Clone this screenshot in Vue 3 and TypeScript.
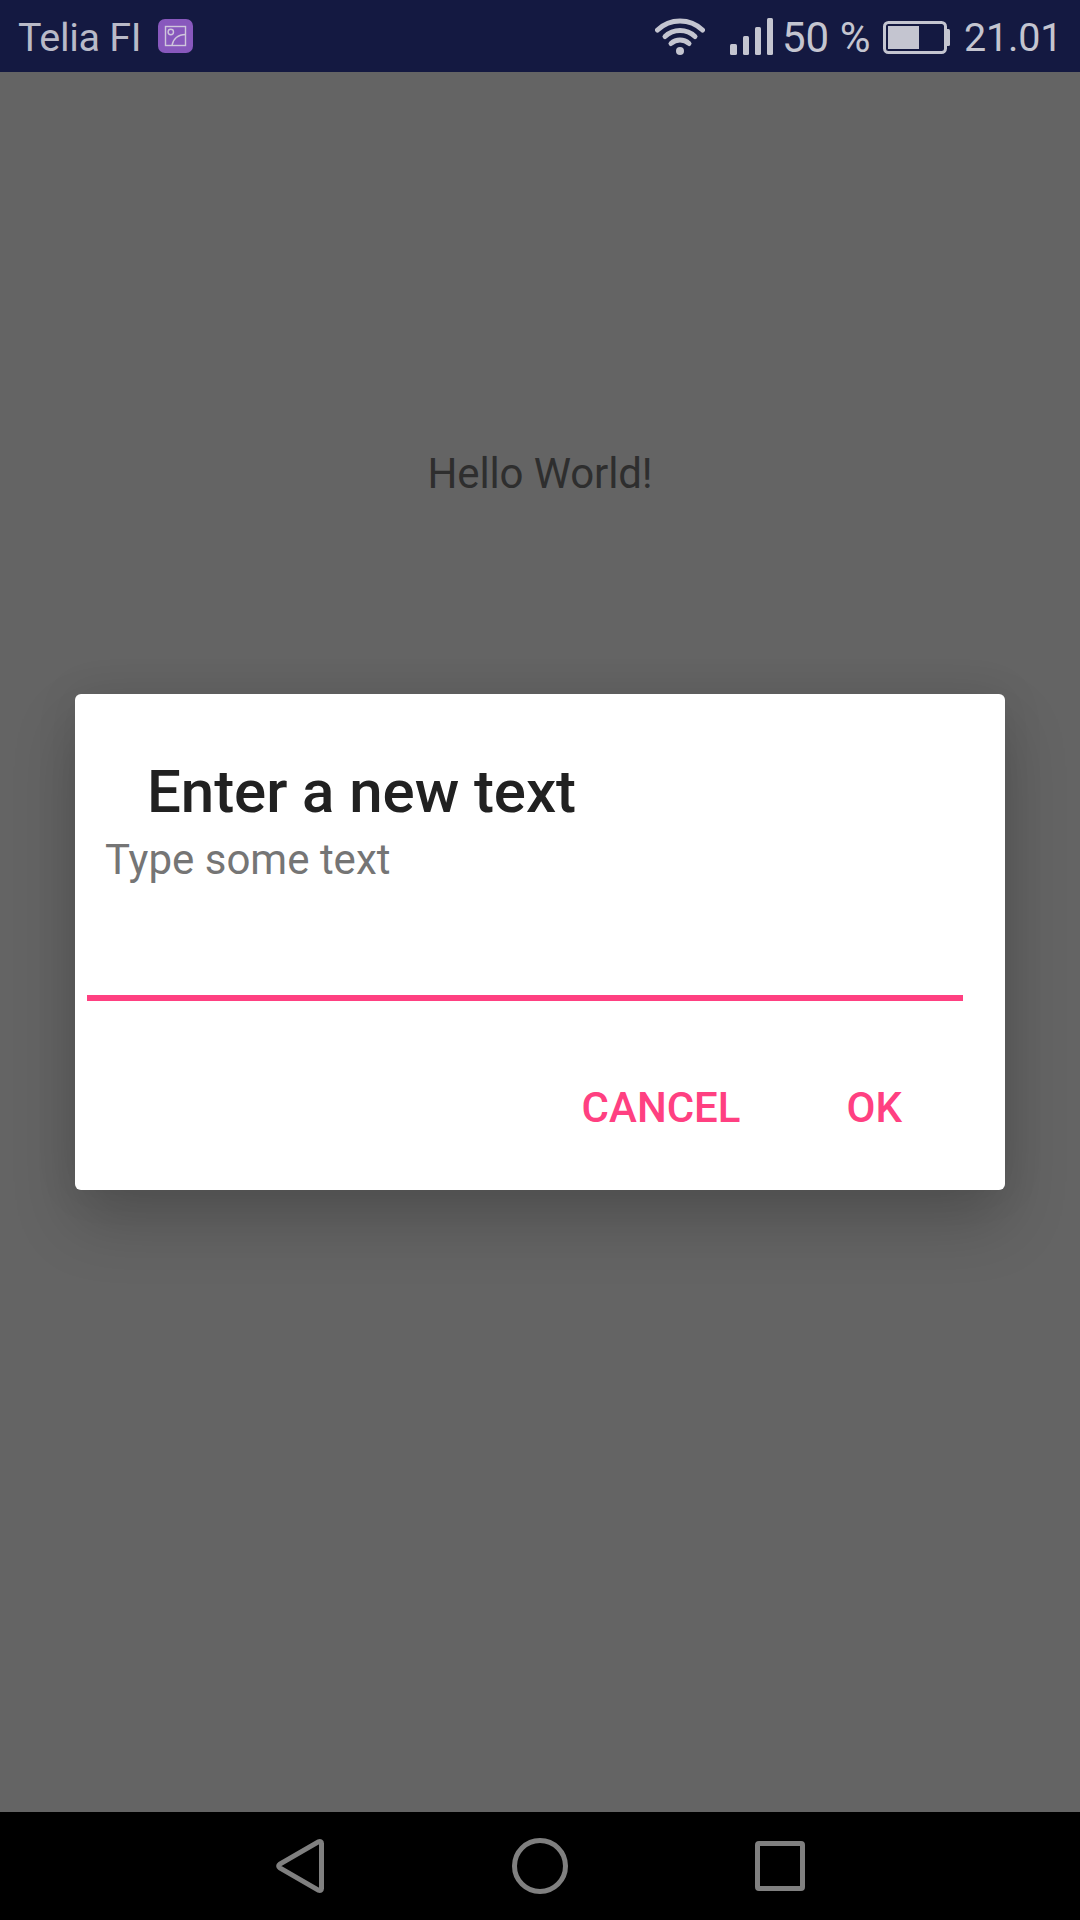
<script setup lang="ts">
import { ref } from 'vue'

interface SignalBar {
  x: number
  y: number
  width: number
}

const carrier = 'Telia FI'
const time = '21.01'
const battery = 50
const signalBars: SignalBar[] = [
  { x: 0, y: 26, width: 7 },
  { x: 13, y: 18, width: 6 },
  { x: 25, y: 9, width: 6 },
  { x: 37, y: 0, width: 6 },
]
const value = ref('')
</script>

<template>
  <div class="screen">
    <header class="status">
      <span class="carrier">{{ carrier }}</span>
      <svg class="app-icon" width="36" height="34" viewBox="0 0 36 34">
        <rect width="35" height="34" rx="7" fill="#8858bd" />
        <g fill="none" stroke="#cfc6dc" stroke-width="1.4">
          <rect x="7.5" y="7.5" width="20" height="19" />
          <circle cx="12.8" cy="13" r="2.7" />
          <path d="M14 26.500C15 20 20 15.500 27.500 15.500" />
        </g>
      </svg>
      <svg class="wifi" width="50" height="37" viewBox="0 0 50 37">
        <g fill="none" stroke="#c4c5d0" stroke-width="5" stroke-linecap="round">
          <path d="M2.500 12A32.600 32.600 0 0 1 47.500 12" />
          <path d="M10 18.500A21.800 21.800 0 0 1 40 18.500" />
          <path d="M16 25.500A13.300 13.300 0 0 1 34 25.500" />
        </g>
        <circle cx="25" cy="33" r="4" fill="#c4c5d0" />
      </svg>
      <svg class="signal" width="43" height="37" viewBox="0 0 43 37">
        <rect
          v-for="bar in signalBars"
          :key="bar.x"
          :x="bar.x"
          :y="bar.y"
          :width="bar.width"
          :height="37 - bar.y"
          rx="1.5"
          fill="#c4c5d0"
        />
      </svg>
      <span class="percent">{{ battery }} %</span>
      <svg class="battery" width="67" height="33" viewBox="0 0 67 33">
        <rect x="1.500" y="1.500" width="61" height="30" rx="4" fill="none" stroke="#c4c5d0" stroke-width="3" />
        <rect x="5" y="5" width="31" height="23" fill="#c4c5d0" />
        <path d="M63 8h2.500q1.500 0 1.500 1.500v14q0 1.500-1.500 1.500H63z" fill="#c4c5d0" />
      </svg>
      <span class="time">{{ time }}</span>
    </header>

    <main class="content">
      <p class="hello">Hello World!</p>
    </main>

    <nav class="navbar">
      <svg width="50" height="56" viewBox="0 0 50 56" class="back">
        <path d="M4.800 26.200L43.300 3.800Q46.500 2.800 46.500 5.500V50.500Q46.500 53.200 43.300 52.200L4.800 29.800Q2.500 28 4.800 26.200Z" fill="none" stroke="#808080" stroke-width="5" stroke-linejoin="round" />
      </svg>
      <svg width="56" height="56" viewBox="0 0 56 56" class="home">
        <circle cx="28" cy="28" r="25.500" fill="none" stroke="#808080" stroke-width="5" />
      </svg>
      <svg width="50" height="50" viewBox="0 0 50 50" class="recent">
        <path fill-rule="evenodd" fill="#808080" d="M4 0H46Q50 0 50 4V46Q50 50 46 50H4Q0 50 0 46V4Q0 0 4 0ZM5 5V45H45V5Z" />
      </svg>
    </nav>

    <div class="overlay">
      <section class="dialog" role="dialog">
        <h1 class="title">Enter a new text</h1>
        <p class="message">Type some text</p>
        <input v-model="value" class="field" type="text" />
        <div class="actions">
          <button type="button" class="cancel">CANCEL</button>
          <button type="button" class="ok">OK</button>
        </div>
      </section>
    </div>
  </div>
</template>

<style>
body {
  margin: 0;
}
</style>

<style scoped>
.screen {
  position: relative;
  display: flex;
  flex-direction: column;
  width: 1080px;
  height: 1920px;
  overflow: hidden;
  background: #646464;
  font-family: Roboto, 'Liberation Sans', sans-serif;
}

.status {
  display: flex;
  flex: none;
  align-items: flex-start;
  height: 72px;
  background: #141941;
  color: #b9bac8;
  font-size: 39.5px;
  line-height: 46px;
  white-space: nowrap;
}

.carrier {
  width: 140px;
  margin: 15px 0 0 18px;
  letter-spacing: -0.3px;
}

.app-icon {
  margin-top: 19px;
}

.wifi {
  margin: 18px 0 0 461px;
}

.signal {
  margin: 18px 0 0 25px;
}

.percent {
  width: 101px;
  margin: 15px 0 0 9px;
  color: #c4c5d0;
  font-size: 42px;
}

.battery {
  margin-top: 21px;
}

.time {
  margin: 15px 0 0 14px;
  color: #c4c5d0;
  letter-spacing: -0.2px;
}

.status svg,
.navbar svg {
  display: block;
  flex: none;
}

.content {
  flex: 1;
  padding-top: 377px;
}

.hello {
  margin: 0;
  color: #2e2e2e;
  font-size: 42px;
  letter-spacing: -0.12px;
  line-height: 50px;
  text-align: center;
}

.navbar {
  display: flex;
  flex: none;
  align-items: center;
  height: 108px;
  background: #000;
}

.back {
  margin-left: 275px;
}

.home {
  margin-left: 187px;
}

.recent {
  margin-left: 187px;
}

.overlay {
  position: absolute;
  inset: 0;
  display: flex;
  justify-content: center;
  align-items: flex-start;
  padding-top: 694px;
}

.dialog {
  box-sizing: border-box;
  display: flex;
  flex-direction: column;
  width: 930px;
  height: 496px;
  padding: 63px 42px 0 12px;
  border-radius: 6px;
  background: #fff;
  box-shadow: 0 32px 64px rgba(0, 0, 0, 0.19), 0 0 44px rgba(0, 0, 0, 0.08);
}

.title {
  margin: 0 0 8px 60px;
  color: #212121;
  font-size: 60px;
  font-weight: 500;
  letter-spacing: -0.07px;
  line-height: 70px;
}

.message {
  margin: 0 0 0 18px;
  color: #757575;
  font-size: 42px;
  line-height: 50px;
}

.field {
  box-sizing: border-box;
  width: 876px;
  height: 116px;
  padding: 0;
  border: 0;
  border-bottom: 6px solid #ff4081;
  outline: 0;
  background: transparent;
  font: inherit;
  font-size: 54px;
}

.actions {
  display: flex;
  justify-content: flex-end;
  margin: 82px 61px 0 0;
}

.actions button {
  padding: 0;
  border: 0;
  background: none;
  color: #ff4081;
  font-family: inherit;
  font-size: 42px;
  font-weight: 500;
  line-height: 50px;
}

.cancel {
  margin-right: 106px;
}
</style>
